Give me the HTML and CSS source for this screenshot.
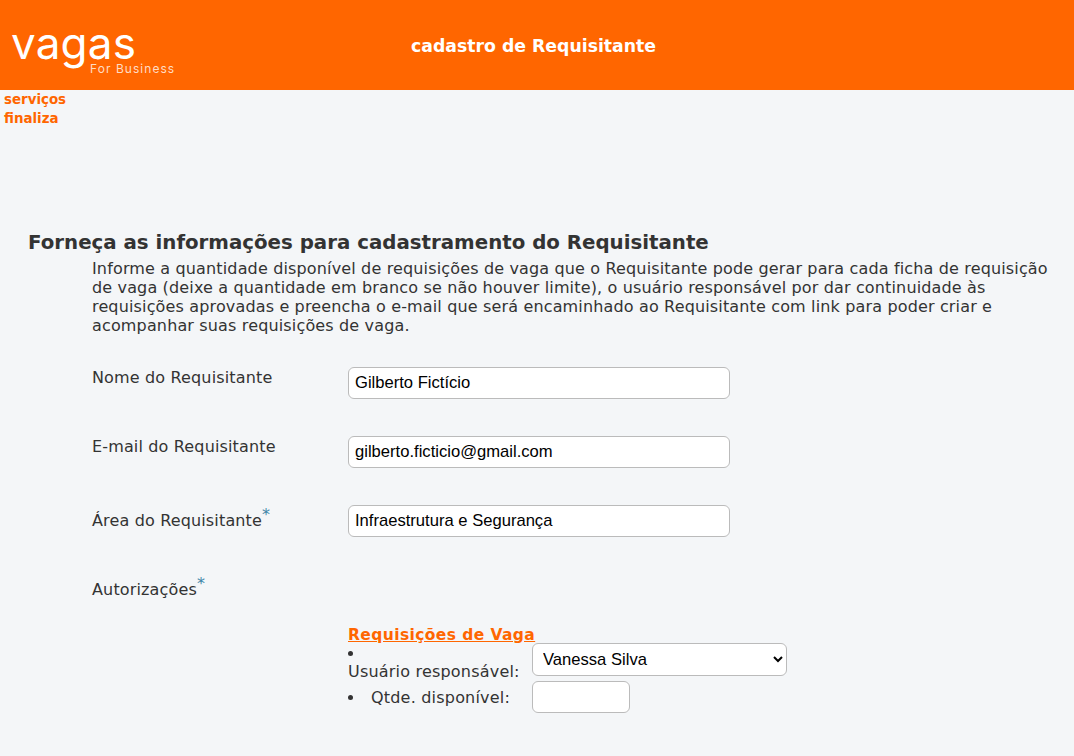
FILE: index.html
```html
<!DOCTYPE html>
<html lang="pt-BR">
<head>
    <meta charset="UTF-8">
    <meta name="viewport" content="width=device-width, initial-scale=1.0">
    <title>Cadastro de Requisitante</title>
    <link rel="stylesheet" href="styles.css">
</head>
<body>
    <header class="top-bar">
        <div class="logo">
            <span class="logo-name">vagas</span>
            <span class="logo-sub">For Business</span>
        </div>
        <div class="top-title">cadastro de Requisitante</div>
    </header>
    <nav class="side-links">
        <a href="#">serviços</a>
        <a href="#">finaliza</a>
    </nav>
    <main class="content">
        <h2>Forneça as informações para cadastramento do Requisitante</h2>
        <p class="intro">Informe a quantidade disponível de requisições de vaga que o Requisitante pode gerar para cada ficha de requisição de vaga (deixe a quantidade em branco se não houver limite), o usuário responsável por dar continuidade às requisições aprovadas e preencha o e-mail que será encaminhado ao Requisitante com link para poder criar e acompanhar suas requisições de vaga.</p>
        <form class="req-form">
            <div class="form-group">
                <label>Nome do Requisitante</label>
                <input type="text" class="text-field" value="Gilberto Fictício">
            </div>
            <div class="form-group">
                <label>E-mail do Requisitante</label>
                <input type="text" class="text-field" value="gilberto.ficticio@gmail.com">
            </div>
            <div class="form-group">
                <label class="required">Área do Requisitante<sup>*</sup></label>
                <input type="text" class="text-field" value="Infraestrutura e Segurança">
            </div>
            <div class="form-group auth-label">
                <label class="required">Autorizações<sup>*</sup></label>
            </div>
            <div class="auth-block">
                <a href="#" class="auth-title">Requisições de Vaga</a>
                <div class="auth-user">
                    <div>
                        <div class="bullet-line"><i class="bullet"></i></div>
                        <span class="auth-text">Usuário responsável:</span>
                    </div>
                    <select class="select-field">
                        <option>Vanessa Silva</option>
                    </select>
                </div>
                <div class="auth-qty">
                    <div class="qty-label">
                        <i class="bullet"></i>
                        <span class="auth-text">Qtde. disponível:</span>
                    </div>
                    <input type="text" class="qty-field">
                </div>
            </div>
        </form>
    </main>
</body>
</html>
```

FILE: styles.css
```css
html {
    overflow: hidden;
}

body {
    font-family: "DejaVu Sans", Verdana, sans-serif;
    margin: 0;
    background-color: #f4f6f8;
    color: #333;
    font-size: 16px;
}

.top-bar {
    background: #ff6600;
    height: 90px;
    display: flex;
    align-items: center;
}

.logo {
    width: 411px;
    height: 90px;
    box-sizing: border-box;
    padding: 24px 0 0 11px;
    color: #fff;
    display: flex;
    flex-direction: column;
}

.logo-name {
    font-family: Inter, sans-serif;
    font-weight: 400;
    font-size: 44px;
    line-height: 38px;
    letter-spacing: 0.2px;
}

.logo-sub {
    margin-left: 79px;
    font-family: Inter, sans-serif;
    font-size: 12px;
    line-height: 14px;
    letter-spacing: 1.05px;
    color: #ffdcc4;
}

.top-title {
    color: #fff;
    font-size: 17.3px;
    font-weight: bold;
    padding-top: 1px;
}

.side-links {
    padding: 0 0 0 4px;
    height: 103px;
}

.side-links a {
    display: block;
    color: #ff6600;
    font-size: 13.4px;
    font-weight: bold;
    line-height: 19px;
    text-decoration: none;
}

.content {
    padding: 38px 20px 0 28px;
}

h2 {
    font-size: 19.8px;
    line-height: 24px;
    margin: 0;
    color: #333;
}

.intro {
    margin: 4px 0 0 64px;
    line-height: 19px;
    letter-spacing: 0.15px;
}

.req-form {
    margin: 32px 0 0 64px;
}

.form-group {
    display: flex;
    height: 69px;
}

label {
    width: 256px;
    line-height: 19px;
    padding-top: 1px;
    letter-spacing: 0.15px;
}

label.required {
    padding-top: 6px;
}

sup {
    color: #3f86a8;
    font-size: 16px;
    line-height: 0;
}

.text-field {
    width: 382px;
    height: 32px;
    box-sizing: border-box;
    padding: 0 6px;
    border: 1px solid #bbb;
    border-radius: 6px;
    background: #fff;
    font-family: "Liberation Sans", Arial, sans-serif;
    font-size: 16.6px;
    color: #000;
}

.auth-label {
    height: 53px;
}

.auth-block {
    margin-left: 256px;
}

.auth-title {
    color: #ff6600;
    font-weight: bold;
    font-size: 15.5px;
    line-height: 16px;
    letter-spacing: 0.4px;
    display: block;
}

.auth-user,
.auth-qty {
    display: grid;
    grid-template-columns: 184px auto;
    justify-content: start;
}

.auth-user {
    height: 38px;
}

.bullet-line {
    height: 19px;
}

.bullet {
    display: inline-block;
    width: 5px;
    height: 5px;
    border-radius: 50%;
    background: #333;
    vertical-align: middle;
}

.auth-text {
    line-height: 19px;
    letter-spacing: 0.2px;
}

.qty-label {
    display: flex;
    align-items: center;
    gap: 18px;
}

.select-field {
    width: 255px;
    height: 33px;
    border: 1px solid #bbb;
    border-radius: 6px;
    background: #fff;
    font-family: "Liberation Sans", Arial, sans-serif;
    font-size: 16.6px;
    color: #000;
    padding-left: 6px;
}

.qty-field {
    width: 98px;
    height: 32px;
    box-sizing: border-box;
    border: 1px solid #bbb;
    border-radius: 6px;
    background: #fff;
}
```
